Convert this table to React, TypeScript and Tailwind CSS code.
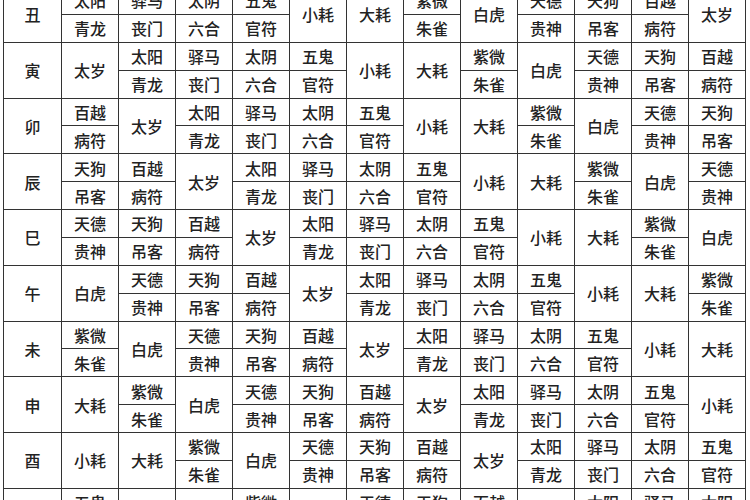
import React from "react";

const ITEMS: (string | [string, string])[] = [
  "太岁",
  ["太阳", "青龙"],
  ["驿马", "丧门"],
  ["太阴", "六合"],
  ["五鬼", "官符"],
  "小耗",
  "大耗",
  ["紫微", "朱雀"],
  "白虎",
  ["天德", "贵神"],
  ["天狗", "吊客"],
  ["百越", "病符"],
];

const BRANCHES = ["丑", "寅", "卯", "辰", "巳", "午", "未", "申", "酉", "戌", "亥"];

const cell = "border border-[#333333] text-center align-middle p-0 leading-none";

export default function App() {
  return (
    <div
      className="bg-white w-[750px] h-[500px] overflow-hidden text-[#222222]"
      style={{ fontFamily: '"Noto Sans CJK SC", "Noto Sans", sans-serif' }}
    >
      <table className="border-collapse table-fixed w-[743px] ml-[3px] -mt-[14px] text-[16px] font-medium">
        <colgroup>
          <col className="w-[58px]" />
          {Array.from({ length: 12 }).map((_, i) => (
            <col key={i} className="w-[57px]" />
          ))}
        </colgroup>
        <tbody>
          {BRANCHES.map((b, k) => {
            const row = Array.from({ length: 12 }).map(
              (_, c) => ITEMS[(((c - k + 1) % 12) + 12) % 12]
            );
            return (
              <React.Fragment key={b}>
                <tr className="h-[27.875px]">
                  <td rowSpan={2} className={cell}>
                    {b}
                  </td>
                  {row.map((it, c) =>
                    typeof it === "string" ? (
                      <td key={c} rowSpan={2} className={cell}>
                        {it}
                      </td>
                    ) : (
                      <td key={c} className={cell}>
                        {it[0]}
                      </td>
                    )
                  )}
                </tr>
                <tr className="h-[27.875px]">
                  {row.map((it, c) =>
                    typeof it === "string" ? null : (
                      <td key={c} className={cell}>
                        {it[1]}
                      </td>
                    )
                  )}
                </tr>
              </React.Fragment>
            );
          })}
        </tbody>
      </table>
    </div>
  );
}
